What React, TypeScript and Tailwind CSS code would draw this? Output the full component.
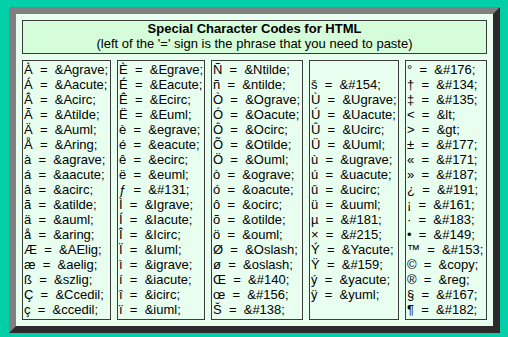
const columns: { width: string; rows: [string, string][] }[] = [
  {
    width: "w-[89px]",
    rows: [
      ["À", "&Agrave;"],
      ["Á", "&Aacute;"],
      ["Â", "&Acirc;"],
      ["Ã", "&Atilde;"],
      ["Ä", "&Auml;"],
      ["Å", "&Aring;"],
      ["à", "&agrave;"],
      ["á", "&aacute;"],
      ["â", "&acirc;"],
      ["ã", "&atilde;"],
      ["ä", "&auml;"],
      ["å", "&aring;"],
      ["Æ", "&AElig;"],
      ["æ", "&aelig;"],
      ["ß", "&szlig;"],
      ["Ç", "&Ccedil;"],
      ["ç", "&ccedil;"],
    ],
  },
  {
    width: "w-[88px]",
    rows: [
      ["È", "&Egrave;"],
      ["É", "&Eacute;"],
      ["Ê", "&Ecirc;"],
      ["Ë", "&Euml;"],
      ["è", "&egrave;"],
      ["é", "&eacute;"],
      ["ê", "&ecirc;"],
      ["ë", "&euml;"],
      ["ƒ", "&#131;"],
      ["Ì", "&Igrave;"],
      ["Í", "&Iacute;"],
      ["Î", "&Icirc;"],
      ["Ï", "&Iuml;"],
      ["ì", "&igrave;"],
      ["í", "&iacute;"],
      ["î", "&icirc;"],
      ["ï", "&iuml;"],
    ],
  },
  {
    width: "w-[92px]",
    rows: [
      ["Ñ", "&Ntilde;"],
      ["ñ", "&ntilde;"],
      ["Ò", "&Ograve;"],
      ["Ó", "&Oacute;"],
      ["Ô", "&Ocirc;"],
      ["Õ", "&Otilde;"],
      ["Ö", "&Ouml;"],
      ["ò", "&ograve;"],
      ["ó", "&oacute;"],
      ["ô", "&ocirc;"],
      ["õ", "&otilde;"],
      ["ö", "&ouml;"],
      ["Ø", "&Oslash;"],
      ["ø", "&oslash;"],
      ["Œ", "&#140;"],
      ["œ", "&#156;"],
      ["Š", "&#138;"],
    ],
  },
  {
    width: "w-[90px]",
    rows: [
      ["", ""],
      ["š", "&#154;"],
      ["Ù", "&Ugrave;"],
      ["Ú", "&Uacute;"],
      ["Û", "&Ucirc;"],
      ["Ü", "&Uuml;"],
      ["ù", "&ugrave;"],
      ["ú", "&uacute;"],
      ["û", "&ucirc;"],
      ["ü", "&uuml;"],
      ["µ", "&#181;"],
      ["×", "&#215;"],
      ["Ý", "&Yacute;"],
      ["Ÿ", "&#159;"],
      ["ý", "&yacute;"],
      ["ÿ", "&yuml;"],
    ],
  },
  {
    width: "w-[82px]",
    rows: [
      ["°", "&#176;"],
      ["†", "&#134;"],
      ["‡", "&#135;"],
      ["<", "&lt;"],
      [">", "&gt;"],
      ["±", "&#177;"],
      ["«", "&#171;"],
      ["»", "&#187;"],
      ["¿", "&#191;"],
      ["¡", "&#161;"],
      ["·", "&#183;"],
      ["•", "&#149;"],
      ["™", "&#153;"],
      ["©", "&copy;"],
      ["®", "&reg;"],
      ["§", "&#167;"],
      ["¶", "&#182;"],
    ],
  },
];

const App = () => {
  return (
    <div className="min-h-screen bg-[#00cfa8] pl-[9px] pt-[7px] font-['Liberation_Sans',Arial,sans-serif] text-[13px] leading-[15px] text-black">
      <div className="w-[491px] h-[326px] border-[7px] border-t-[#808080] border-l-[#808080] border-r-[#2b2b2b] border-b-[#2b2b2b] bg-[#e8fff0] p-[6px] flex flex-col gap-[6px]">
        {/* Title box */}
        <div className="border border-[#3a3a3a] bg-[#d6fdd9] text-center pb-[2px]">
          <div className="font-bold">Special Character Codes for HTML</div>
          <div>(left of the '=' sign is the phrase that you need to paste)</div>
        </div>

        {/* Code columns */}
        <div className="flex-1 flex justify-between">
          {columns.map((col, i) => (
            <div
              key={i}
              className={`${col.width} border border-[#3a3a3a] bg-[#e8fff0] px-[1px] pt-[1px]`}
            >
              {col.rows.map(([ch, code], j) => (
                <div key={j} className="whitespace-pre">
                  {ch ? `${ch}  =  ${code}` : "\u00a0"}
                </div>
              ))}
            </div>
          ))}
        </div>
      </div>
    </div>
  );
};

export default App;
